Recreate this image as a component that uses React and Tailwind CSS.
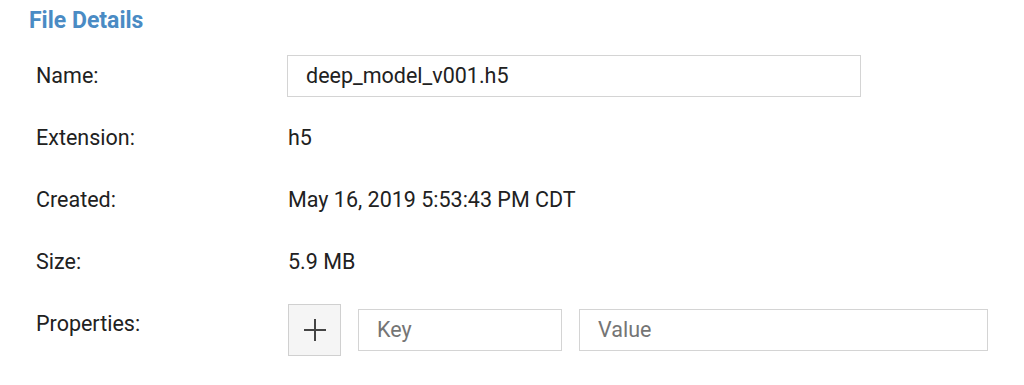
import React from 'react';

const Row = ({ label, children }) => (
    <div className="flex items-center h-[62px]">
        <div className="w-[288px] shrink-0 pl-[36px]">{label}</div>
        <div className="flex items-center flex-1">{children}</div>
    </div>
);

const App = () => {
    return (
        <div className="w-[1024px] h-[385px] bg-white text-[#212121] text-[21.5px] font-['Roboto',sans-serif] overflow-hidden">
            <h2 className="pl-[29px] pt-[7px] h-[34px] leading-[28px] text-[23px] font-bold text-[#4a8bc4]">File Details</h2>
            <div className="mt-[11px]">
                <Row label="Name:">
                    <div className="w-[574px] h-[42px] ml-[-1px] border border-[#d4d4d4] flex items-center px-[18px]">
                        deep_model_v001.h5
                    </div>
                </Row>
                <Row label="Extension:">h5</Row>
                <Row label="Created:">May 16, 2019 5:53:43 PM CDT</Row>
                <Row label="Size:">5.9 MB</Row>
                <Row label="Properties:">
                    <div className="flex items-center mt-[12px]">
                        <button className="w-[53px] h-[52px] border border-[#d0d0d0] bg-[#f5f5f5] flex items-center justify-center">
                            <svg width="24" height="24" viewBox="0 0 24 24">
                                <path d="M12 1v22M1 12h22" stroke="#444" strokeWidth="2" />
                            </svg>
                        </button>
                        <div className="ml-[17px] w-[204px] h-[42px] border border-[#d4d4d4] flex items-center px-[18px] text-[#757575]">Key</div>
                        <div className="ml-[17px] w-[409px] h-[42px] border border-[#d4d4d4] flex items-center px-[18px] text-[#757575]">Value</div>
                    </div>
                </Row>
            </div>
        </div>
    );
};

export default App;
